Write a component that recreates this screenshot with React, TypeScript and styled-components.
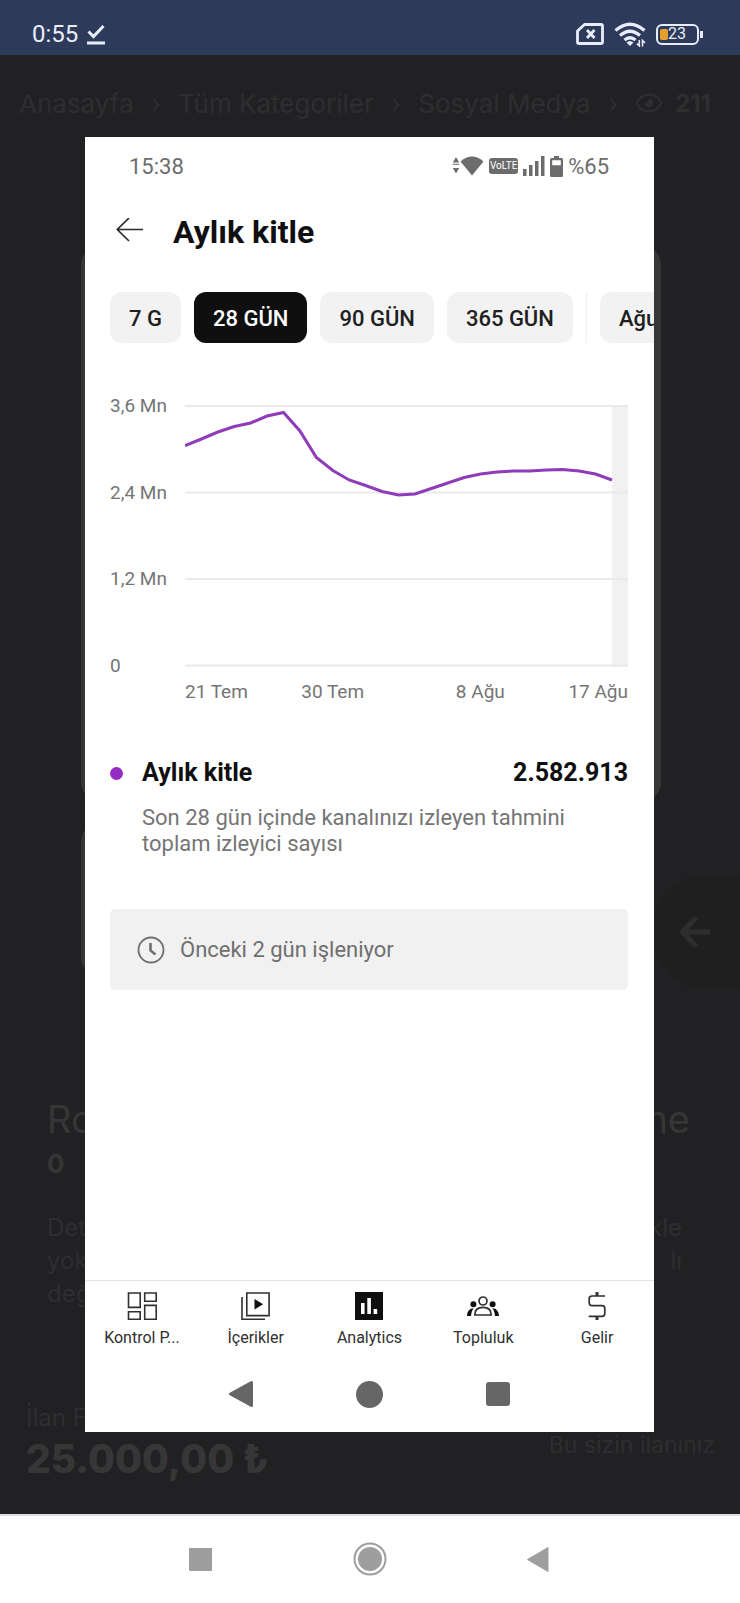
import React from "react";
import styled, { createGlobalStyle } from "styled-components";

const GlobalStyle = createGlobalStyle`
  * { box-sizing: border-box; }
  body {
    margin: 0;
    background: #212123;
    font-family: Roboto, "Liberation Sans", sans-serif;
  }
  button { border: 0; padding: 0; background: none; font: inherit; color: inherit; }
  h1, h2, p, ul { margin: 0; padding: 0; }
  svg { display: block; flex: none; }
`;

const Screen = styled.div`
  display: flex;
  flex-direction: column;
  min-height: 100vh;
`;

/* Phone status bar */

const StatusBar = styled.header`
  display: flex;
  align-items: center;
  justify-content: space-between;
  height: 55px;
  padding: 13px 37px 0 32px;
  background: #2d3a5a;
  color: #e9edfb;
  font-size: 24px;
`;

const StatusGroup = styled.div<{ $gap: number }>`
  display: flex;
  align-items: center;
  gap: ${(p) => p.$gap}px;
`;

const BatteryCase = styled.span`
  position: relative;
  display: flex;
  align-items: center;
  width: 43px;
  height: 21px;
  margin-right: 4px;
  padding: 0 2px;
  border: 2px solid #e9edfb;
  border-radius: 6px;
  font-size: 16px;
  line-height: 16px;

  &::before {
    content: "";
    width: 8px;
    height: 11px;
    border-radius: 2px;
    background: #e8a02c;
  }
  &::after {
    content: "";
    position: absolute;
    right: -6px;
    top: 5px;
    width: 3px;
    height: 7px;
    background: #e9edfb;
  }
`;

/* Dimmed listing page */

const Stage = styled.main`
  display: grid;
  grid-template-columns: minmax(0, 1fr);
  flex: 1;
`;

const Backdrop = styled.div`
  grid-area: 1 / 1;
  position: relative;
  display: flex;
  flex-direction: column;
  background: #212123;
  color: #2e2e30;
  font-family: Inter, "Open Sans", sans-serif;
  font-size: 24px;
`;

const Breadcrumb = styled.nav`
  display: flex;
  align-items: center;
  justify-content: space-between;
  height: 96px;
  padding: 0 29px 0 19px;
  font-size: 26px;
  white-space: nowrap;

  a { color: inherit; text-decoration: none; }
  strong { font-size: 24px; font-weight: 700; }
`;

const Views = styled.span`
  display: flex;
  align-items: center;
  gap: 12px;
`;

const ListingCard = styled.div<{ $height: number; $right: number }>`
  height: ${(p) => p.$height}px;
  margin: 0 ${(p) => p.$right}px 20px 81px;
  border-radius: 20px;
  background: #363637;

  &:first-of-type { margin-top: 94px; }
`;

const SideTab = styled.button`
  position: absolute;
  right: 0;
  top: 820px;
  width: 86px;
  height: 113px;
  padding-left: 25px;
  border-radius: 50px 0 0 50px;
  background: #1f1f20;
  color: #2e2e30;
`;

const Details = styled.section`
  display: flex;
  flex-direction: column;
  margin-top: 98px;
  padding: 0 50px 0 47px;
`;

const DetailRow = styled.div<{ $size: number; $line: number; $bold?: boolean }>`
  display: flex;
  justify-content: space-between;
  font-size: ${(p) => p.$size}px;
  line-height: ${(p) => p.$line}px;
  font-weight: ${(p) => (p.$bold ? 700 : 400)};
  color: ${(p) => (p.$size > 24 ? "#363637" : "#2e2e30")};
`;

const Description = styled.div`
  margin-top: 26px;
  padding-right: 8px;
`;

const PriceBar = styled.footer`
  display: flex;
  align-items: center;
  justify-content: space-between;
  margin-top: auto;
  padding: 0 25px 28px 26px;
`;

const Price = styled.strong`
  display: block;
  color: #363637;
  font-size: 39px;
  line-height: 54px;
  font-weight: 800;
`;

const OwnerNote = styled.span`
  font-size: 23px;
  line-height: 28px;
`;

/* Opened picture */

const Dialog = styled.section`
  grid-area: 1 / 1;
  z-index: 1;
  display: flex;
  flex-direction: column;
  margin: 82px 86px 82px 85px;
  background: #fff;
  color: #0f0f0f;
  overflow: hidden;
`;

const InnerStatus = styled.div`
  display: flex;
  align-items: center;
  justify-content: space-between;
  height: 58px;
  padding: 0 45px 0 44px;
  color: #6c6c6c;
  font-size: 22px;
`;

const InnerIcons = styled.div`
  display: flex;
  align-items: center;
  gap: 5px;
`;

const Volte = styled.span`
  width: 29px;
  height: 16px;
  border-radius: 3px;
  background: #6c6c6c;
  color: #fff;
  font-size: 10px;
  line-height: 16px;
  text-align: center;
`;

const TitleBar = styled.div`
  display: flex;
  align-items: center;
  gap: 30px;
  height: 72px;
  padding: 0 31px;
`;

const Title = styled.h1`
  padding-top: 2px;
  font-size: 32px;
  line-height: 36px;
  font-weight: 700;
`;

const Chips = styled.div`
  display: flex;
  gap: 13px;
  margin-top: 25px;
  padding-left: 25px;
  overflow: hidden;
`;

const Chip = styled.button<{ $active?: boolean }>`
  flex: none;
  height: 51px;
  padding: 1px 19px 0;
  border-radius: 12px;
  background: ${(p) => (p.$active ? "#0f0f0f" : "#f2f2f2")};
  color: ${(p) => (p.$active ? "#fff" : "#202020")};
  font-size: 22px;
  font-weight: 500;
`;

const ChipDivider = styled.span`
  flex: none;
  width: 1px;
  background: #f0f0f0;
`;

const Chart = styled.figure`
  display: grid;
  grid-template-columns: 75px minmax(0, 1fr);
  margin: 51px 26px 0 25px;
  color: #757575;
  font-size: 19px;
  line-height: 24px;
`;

const ValueAxis = styled.div`
  display: flex;
  flex-direction: column;
  justify-content: space-between;
`;

const Plot = styled.svg`
  width: 100%;
  height: 262px;
  margin: 11px 0;
`;

const DateAxis = styled.div`
  grid-column: 2;
  display: grid;
  grid-template-columns: 1fr 2fr 2fr 1fr;
  margin-top: 2px;
  text-align: center;
  white-space: nowrap;

  span:first-child { text-align: left; }
  span:last-child { text-align: right; }
`;

const Summary = styled.section`
  display: grid;
  grid-template-columns: 32px minmax(0, 1fr) auto;
  align-items: center;
  margin: 53px 26px 0 25px;
  font-size: 25px;
  line-height: 32px;

  h2 { font-size: inherit; font-weight: 700; }
  p {
    grid-column: 2 / 4;
    margin-top: 16px;
    color: #757575;
    font-size: 22px;
    line-height: 26px;
    max-width: 440px;
  }
`;

const Dot = styled.span`
  width: 13px;
  height: 13px;
  border-radius: 50%;
  background: #952cc4;
`;

const Notice = styled.div`
  display: flex;
  align-items: center;
  gap: 15px;
  height: 81px;
  margin: 52px 26px 0 25px;
  padding: 0 27px;
  border-radius: 5px;
  background: #f1f1f1;
  color: #6f6f6f;
  font-size: 22px;
`;

const TabBar = styled.nav`
  display: grid;
  grid-template-columns: repeat(5, minmax(0, 1fr));
  height: 76px;
  margin-top: auto;
  border-top: 1px solid #e4e4e4;
`;

const Tab = styled.button`
  display: flex;
  flex-direction: column;
  align-items: center;
  gap: 8px;
  padding-top: 11px;
  color: #303030;
  font-size: 16px;
  line-height: 20px;
`;

const NavKeys = styled.div<{ $gap: number; $height: number; $color: string }>`
  display: flex;
  align-items: center;
  justify-content: center;
  gap: ${(p) => p.$gap}px;
  height: ${(p) => p.$height}px;
  color: ${(p) => p.$color};
`;

const SystemNav = styled.footer`
  height: 89px;
  border-top: 2px solid #dedede;
  background: #fff;
`;

const values = [
  39.5, 33, 26, 20.5, 17, 10, 6.5, 25, 51.5, 64.5, 74, 79.5, 85.5, 89, 88, 82.5,
  77, 71.5, 68, 66, 65, 65, 64, 63.5, 65, 68, 74,
];
const linePoints = values
  .map((y, i) => `${((i * 426) / 26).toFixed(1)},${y + 1}`)
  .join(" ");

const tabs = [
  {
    label: "Kontrol P...",
    icon: (
      <svg width="30" height="28" viewBox="0 0 30 28" fill="none" stroke="currentColor" strokeWidth="1.6">
        <path d="M1.5 1h11.7v14.4H1.5zM17.7 1h11.5v8.2H17.7zM1.5 19.8h11.7v7.4H1.5zM17.7 13.4h11.5v13.8H17.7z" />
      </svg>
    ),
  },
  {
    label: "İçerikler",
    icon: (
      <svg width="29" height="28" viewBox="0 0 29 28" fill="none" stroke="currentColor" strokeWidth="1.6">
        <path d="M5.8 1h22.3v22.6H5.8zM1 5v22.2h23" />
        <path d="M13.5 7v10.4l8.6-5.2z" fill="#0f0f0f" stroke="none" />
      </svg>
    ),
  },
  {
    label: "Analytics",
    icon: (
      <svg width="28" height="28" viewBox="0 0 28 28">
        <path d="M0 0h28v28H0z" fill="#0f0f0f" />
        <path d="M6 11h3.6v11H6zM12.3 6h3.6v16h-3.6zM18.6 17h3.6v5h-3.6z" fill="#fff" />
      </svg>
    ),
  },
  {
    label: "Topluluk",
    icon: (
      <svg width="32" height="28" viewBox="0 0 32 28" fill="none" stroke="currentColor" strokeWidth="1.7">
        <circle cx="16" cy="9" r="4" />
        <path d="M7.8 23c0-5 3.2-7.6 8.2-7.6s8.2 2.6 8.2 7.6z" />
        <g fill="#0f0f0f" stroke="none">
          <circle cx="6.4" cy="12.3" r="3" />
          <circle cx="25.6" cy="12.3" r="3" />
          <path d="M0 24c.3-4.500 2.400-7.600 6.800-7.700-1.600 2-2.600 4.400-2.800 7.700zM32 24c-.3-4.500-2.400-7.600-6.800-7.700 1.600 2 2.600 4.400 2.800 7.700z" />
        </g>
      </svg>
    ),
  },
  {
    label: "Gelir",
    icon: (
      <svg width="18" height="28" viewBox="0 0 18 28" fill="none" stroke="currentColor" strokeWidth="1.7">
        <path d="M17 4H4Q1.200 4 1.200 6.800v4Q1.200 13.600 4 13.600h10q2.800 0 2.800 2.800v5.200q0 2.800-2.800 2.800H.8" />
        <path d="M9 0v4M9 24.400V28" strokeWidth="3" />
      </svg>
    ),
  },
];

export default function App() {
  return (
    <Screen>
      <GlobalStyle />
      <StatusBar>
        <StatusGroup $gap={9}>
          <span>0:55</span>
          <svg width="18" height="21" viewBox="0 0 18 21" fill="none" stroke="currentColor" strokeWidth="3">
            <path d="M1.500 7.500l5 5L16.500 2M0 19h18" />
          </svg>
        </StatusGroup>
        <StatusGroup $gap={10}>
          <svg width="28" height="22" viewBox="0 0 28 22" fill="none" stroke="currentColor" strokeWidth="2.800">
            <path d="M8.500 1.500H25q1.500 0 1.500 1.500v16q0 1.500-1.500 1.500H3q-1.500 0-1.500-1.500V8z" strokeLinejoin="round" />
            <path d="M11 7l7.500 8M18.500 7L11 15" />
          </svg>
          <svg width="32" height="25" viewBox="0 0 32 25" fill="none" stroke="currentColor" strokeWidth="3.200">
            <path d="M1.500 8.500Q16-4 30.500 8.500M6 13.500q10-8.500 20 0M10.500 18q5.500-4.500 11 0" />
            <path d="M12.500 20.500q3.500-3 7 0L16 24z" fill="currentColor" stroke="none" />
            <path d="M25.300 18v6l-2.500-2.500M28.500 24.500v-6l2.500 2.500" strokeWidth="1.600" />
          </svg>
          <BatteryCase>23</BatteryCase>
        </StatusGroup>
      </StatusBar>

      <Stage>
        <Backdrop>
          <Breadcrumb aria-label="Kategori yolu">
            <a href="#anasayfa">Anasayfa</a>
            <span>›</span>
            <a href="#kategoriler">Tüm Kategoriler</a>
            <span>›</span>
            <a href="#sosyal-medya">Sosyal Medya</a>
            <span>›</span>
            <Views>
              <svg width="28" height="20" viewBox="0 0 28 20" fill="none" stroke="currentColor" strokeWidth="2.400">
                <path d="M1.500 10Q6 1.500 14 1.500T26.500 10Q22 18.500 14 18.500T1.500 10z" />
                <path d="M14 5.500A4.500 4.500 0 1 1 9.500 10q2.500.8 4.500-4.500z" fill="currentColor" stroke="none" />
              </svg>
              <strong>211</strong>
            </Views>
          </Breadcrumb>
          <ListingCard $height={557} $right={79} />
          <ListingCard $height={155} $right={90} />
          <SideTab aria-label="Geri">
            <svg width="32" height="34" viewBox="0 0 32 34" fill="none" stroke="currentColor" strokeWidth="5">
              <path d="M31 17H4M17 2.500L3.500 17 17 31.500" />
            </svg>
          </SideTab>
          <Details>
            <DetailRow $size={38} $line={48}>
              <span>Ro</span>
              <span>ne</span>
            </DetailRow>
            <DetailRow $size={26} $line={42} $bold>
              <span>0</span>
            </DetailRow>
            <Description>
              <DetailRow $size={24} $line={33}>
                <span>Det</span>
                <span>kle</span>
              </DetailRow>
              <DetailRow $size={24} $line={33}>
                <span>yok</span>
                <span>lı</span>
              </DetailRow>
              <DetailRow $size={24} $line={33}>
                <span>değ</span>
              </DetailRow>
            </Description>
          </Details>
          <PriceBar>
            <div>
              <span>İlan F</span>
              <Price>25.000,00 ₺</Price>
            </div>
            <OwnerNote>Bu sizin ilanınız</OwnerNote>
          </PriceBar>
        </Backdrop>

        <Dialog role="dialog" aria-label="Aylık kitle">
          <InnerStatus>
            <span>15:38</span>
            <InnerIcons>
              <svg width="32" height="20" viewBox="0 0 32 20" fill="currentColor">
                <path d="M4 1l3.200 5.500H.8zM4 17.500L.8 12h6.400zM.8 7.800h6.400v1H.8z" />
                <path d="M8.500 5.500Q20-4.500 31.500 5.500L20 19.500z" />
              </svg>
              <Volte>VoLTE</Volte>
              <svg width="22" height="20" viewBox="0 0 22 20" fill="currentColor">
                <path d="M0 13h3.500v7H0zM6 9h3.500v11H6zM12 5h3.500v15H12zM18 0h3.500v20H18z" />
              </svg>
              <svg width="13" height="21" viewBox="0 0 13 21" fill="currentColor">
                <path fillRule="evenodd" d="M4 0h5v2h2.500Q13 2 13 3.500v16q0 1.500-1.500 1.500h-10Q0 21 0 19.500v-16Q0 2 1.500 2H4zM2.200 4.200v5h8.600v-5z" />
              </svg>
              <span>%65</span>
            </InnerIcons>
          </InnerStatus>

          <TitleBar>
            <button aria-label="Geri dön">
              <svg width="27" height="26" viewBox="0 0 27 26" fill="none" stroke="#2a2a2a" strokeWidth="1.700">
                <path d="M27 11.500H1.500M13 0L1.300 11.500 13 23" />
              </svg>
            </button>
            <Title>Aylık kitle</Title>
          </TitleBar>

          <Chips>
            <Chip>7 G</Chip>
            <Chip $active>28 GÜN</Chip>
            <Chip>90 GÜN</Chip>
            <Chip>365 GÜN</Chip>
            <ChipDivider />
            <Chip>Ağustos</Chip>
          </Chips>

          <Chart>
            <ValueAxis>
              <span>3,6 Mn</span>
              <span>2,4 Mn</span>
              <span>1,2 Mn</span>
              <span>0</span>
            </ValueAxis>
            <Plot viewBox="0 0 442 262" preserveAspectRatio="none" role="img" aria-label="Aylık kitle grafiği">
              <path d="M426 0h16v262h-16z" fill="#f1f1f1" />
              <path d="M0 1h442M0 87.500h442M0 174h442M0 260.500h442" stroke="#eaeaea" strokeWidth="2" />
              <polyline points={linePoints} fill="none" stroke="#8f3cba" strokeWidth="3" vectorEffect="non-scaling-stroke" />
            </Plot>
            <DateAxis>
              <span>21 Tem</span>
              <span>30 Tem</span>
              <span>8 Ağu</span>
              <span>17 Ağu</span>
            </DateAxis>
          </Chart>

          <Summary>
            <Dot />
            <h2>Aylık kitle</h2>
            <strong>2.582.913</strong>
            <p>Son 28 gün içinde kanalınızı izleyen tahmini toplam izleyici sayısı</p>
          </Summary>

          <Notice>
            <svg width="28" height="28" viewBox="0 0 28 28" fill="none" stroke="currentColor" strokeWidth="1.800">
              <circle cx="14" cy="14" r="12.500" />
              <path d="M13.500 7v7.500l5 4" strokeWidth="2.600" />
            </svg>
            <span>Önceki 2 gün işleniyor</span>
          </Notice>

          <TabBar>
            {tabs.map((tab) => (
              <Tab key={tab.label}>
                {tab.icon}
                <span>{tab.label}</span>
              </Tab>
            ))}
          </TabBar>

          <NavKeys $gap={102} $height={76} $color="#666">
            <svg width="26" height="28" viewBox="0 0 26 28" fill="currentColor" stroke="currentColor" strokeWidth="3" strokeLinejoin="round">
              <path d="M2.500 14L23.500 2.500v23z" />
            </svg>
            <svg width="27" height="27" viewBox="0 0 27 27" fill="currentColor">
              <circle cx="13.500" cy="13.500" r="13.500" />
            </svg>
            <svg width="26" height="26" viewBox="0 0 26 26" fill="currentColor">
              <rect x="1" y="1" width="24" height="24" rx="3" />
            </svg>
          </NavKeys>
        </Dialog>
      </Stage>

      <SystemNav>
        <NavKeys $gap={135} $height={85} $color="#9e9e9e">
          <svg width="34" height="34" viewBox="0 0 34 34" fill="currentColor">
            <rect x="5" y="6" width="23" height="23" rx="1" />
          </svg>
          <svg width="34" height="34" viewBox="0 0 34 34" fill="none" stroke="currentColor" strokeWidth="2">
            <circle cx="17" cy="17" r="15.500" />
            <circle cx="17" cy="17" r="12" fill="currentColor" stroke="none" />
          </svg>
          <svg width="34" height="34" viewBox="0 0 34 34" fill="currentColor" stroke="currentColor" strokeWidth="1" strokeLinejoin="round">
            <path d="M5.500 17.500L26 5.500v24z" />
          </svg>
        </NavKeys>
      </SystemNav>
    </Screen>
  );
}
